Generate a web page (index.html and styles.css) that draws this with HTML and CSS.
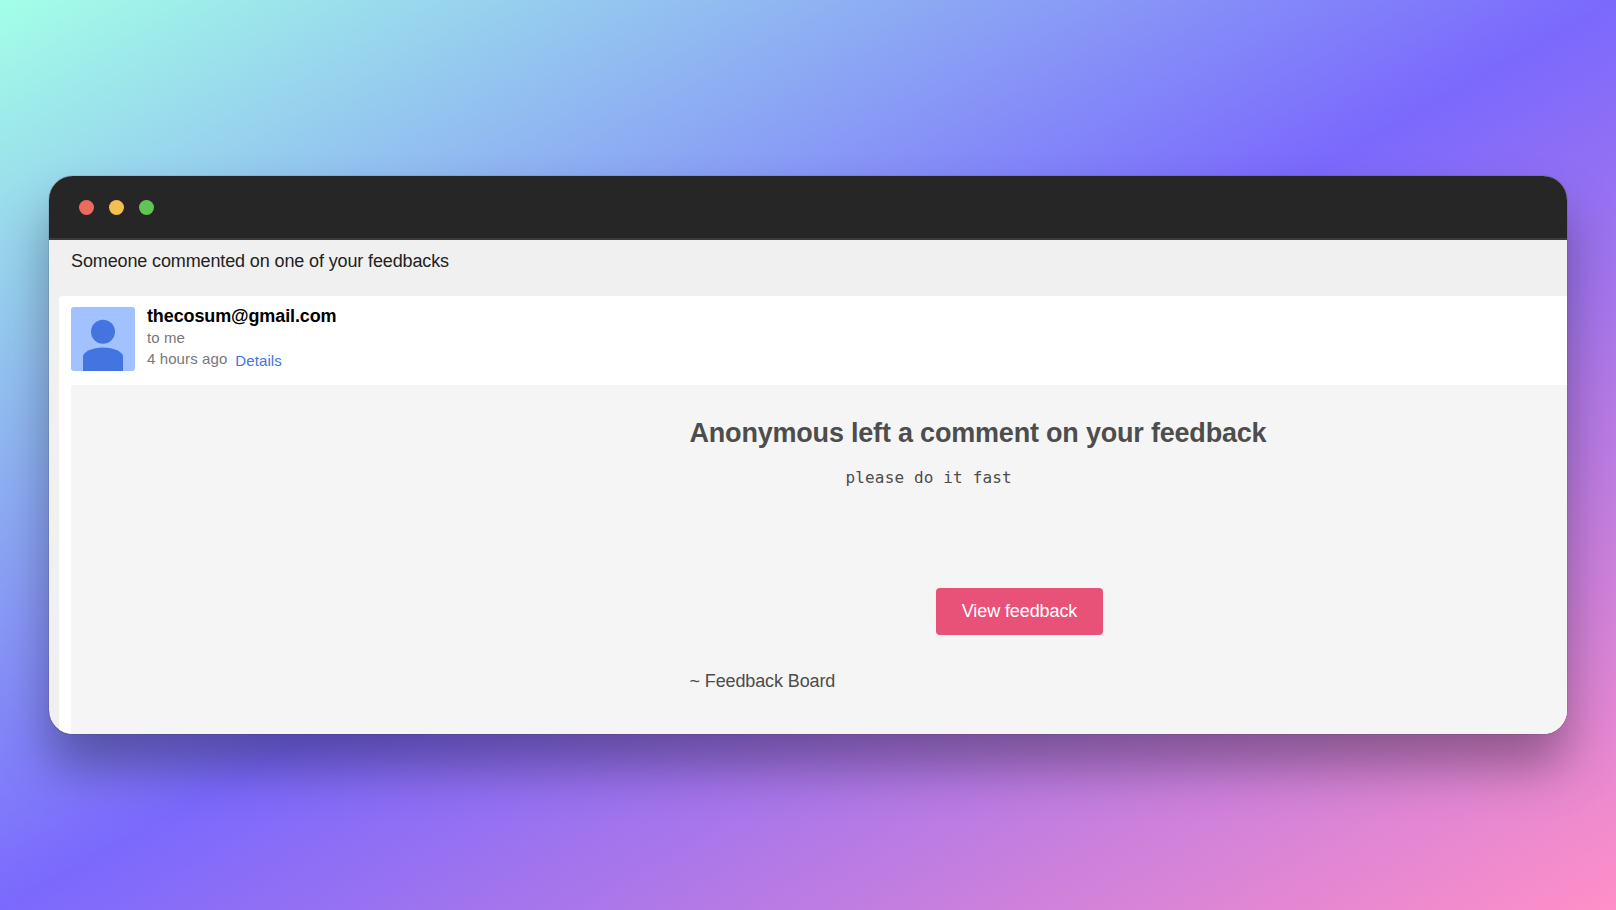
FILE: index.html
```html
<!DOCTYPE html>
<html lang="en">
<head>
<meta charset="utf-8">
<title>Feedback Board</title>
<link rel="stylesheet" href="styles.css">
</head>
<body>
<div class="window">
  <header class="titlebar">
    <span class="dot dot-red"></span>
    <span class="dot dot-yellow"></span>
    <span class="dot dot-green"></span>
  </header>
  <main class="mail">
    <h1 class="subject">Someone commented on one of your feedbacks</h1>
    <section class="card">
      <div class="sender">
        <svg class="avatar" viewBox="0 0 64 64">
          <rect width="64" height="64" rx="3" fill="#a1c2fe"/>
          <circle cx="32" cy="24.7" r="12" fill="#4374e0"/>
          <path d="M12 64V49.500C12 45 21 40.500 32 40.500S52 45 52 49.500V64Z" fill="#4374e0"/>
        </svg>
        <div class="meta">
          <div class="from">thecosum@gmail.com</div>
          <div class="to">to me</div>
          <div class="when"><span class="ago">4 hours ago</span><a class="details">Details</a></div>
        </div>
      </div>
      <article class="message">
        <h2 class="headline">Anonymous left a comment on your feedback</h2>
        <pre class="comment">please do it fast</pre>
        <a class="button"><span class="button-label">View feedback</span></a>
        <p class="signature">~ Feedback Board</p>
      </article>
    </section>
  </main>
</div>
</body>
</html>
```
FILE: styles.css
```css
* { box-sizing: border-box; }
html, body { height: 100%; }
body {
  margin: 0;
  padding: 176px 49px;
  overflow: hidden;
  background: linear-gradient(to bottom right, #a3ffe7 0%, #7b69fd 50%, #ff8fc7 100%);
  font-family: "Liberation Sans", Arial, sans-serif;
}
.window {
  display: flex;
  flex-direction: column;
  height: 558px;
  border-radius: 24px;
  overflow: hidden;
  background: #f0f0f0;
  box-shadow: 0 0 1px rgba(0,0,0,.8), 0 33px 50px rgba(0,0,0,.34);
}
.titlebar {
  flex: none;
  display: flex;
  align-items: center;
  gap: 15px;
  height: 64px;
  padding-left: 29.500px;
  background: #262626;
  border-bottom: 2px solid #3c3c3c;
}
.dot { width: 15px; height: 15px; border-radius: 50%; }
.dot-red { background: #ec6a5e; }
.dot-yellow { background: #f4bf4f; }
.dot-green { background: #61c554; }
.mail {
  flex: 1;
  display: flex;
  flex-direction: column;
  padding-left: 10px;
}
.subject {
  margin: 0;
  padding: 9px 12px 0;
  height: 55.500px;
  font-size: 18px;
  line-height: 24px;
  letter-spacing: -.125px;
  font-weight: 400;
  color: #222;
}
.card {
  flex: 1;
  display: flex;
  flex-direction: column;
  padding: 12px 0 0 12px;
  background: #fff;
  border-top-left-radius: 4px;
}
.sender { display: flex; gap: 12px; height: 77px; }
.avatar { width: 64px; height: 64px; margin-top: -.4px; }
.meta { color: #777; font-size: 15px; line-height: 21.500px; letter-spacing: .1px; }
.from {
  margin-top: -3px;
  font-size: 18px;
  line-height: 22px;
  letter-spacing: -.12px;
  font-weight: 700;
  color: #000;
}
.when { display: flex; gap: 8px; }
.details { padding-top: 2px; color: #4374e0; }
.message {
  flex: 1;
  display: flex;
  flex-direction: column;
  align-items: flex-start;
  padding: 30px 0 0 618.500px;
  background: #f5f5f5;
  border-top-left-radius: 2px;
  color: #4d4d4d;
}
.headline {
  margin: 0;
  font-size: 27px;
  line-height: 36px;
  letter-spacing: -.2px;
  white-space: nowrap;
}
.comment {
  margin: 15px 0 0 156px;
  font-family: "DejaVu Sans Mono", monospace;
  font-size: 16px;
  line-height: 24px;
  letter-spacing: .15px;
}
.button {
  display: flex;
  align-items: center;
  justify-content: center;
  width: 167px;
  height: 47px;
  margin: 98px 0 0 246.500px;
  border-radius: 4px;
  background: #e85178;
  color: #fff;
  font-size: 18px;
  letter-spacing: -.1px;
}
.signature { margin: 34px 0 0; font-size: 18px; line-height: 24px; letter-spacing: -.12px; }
```
